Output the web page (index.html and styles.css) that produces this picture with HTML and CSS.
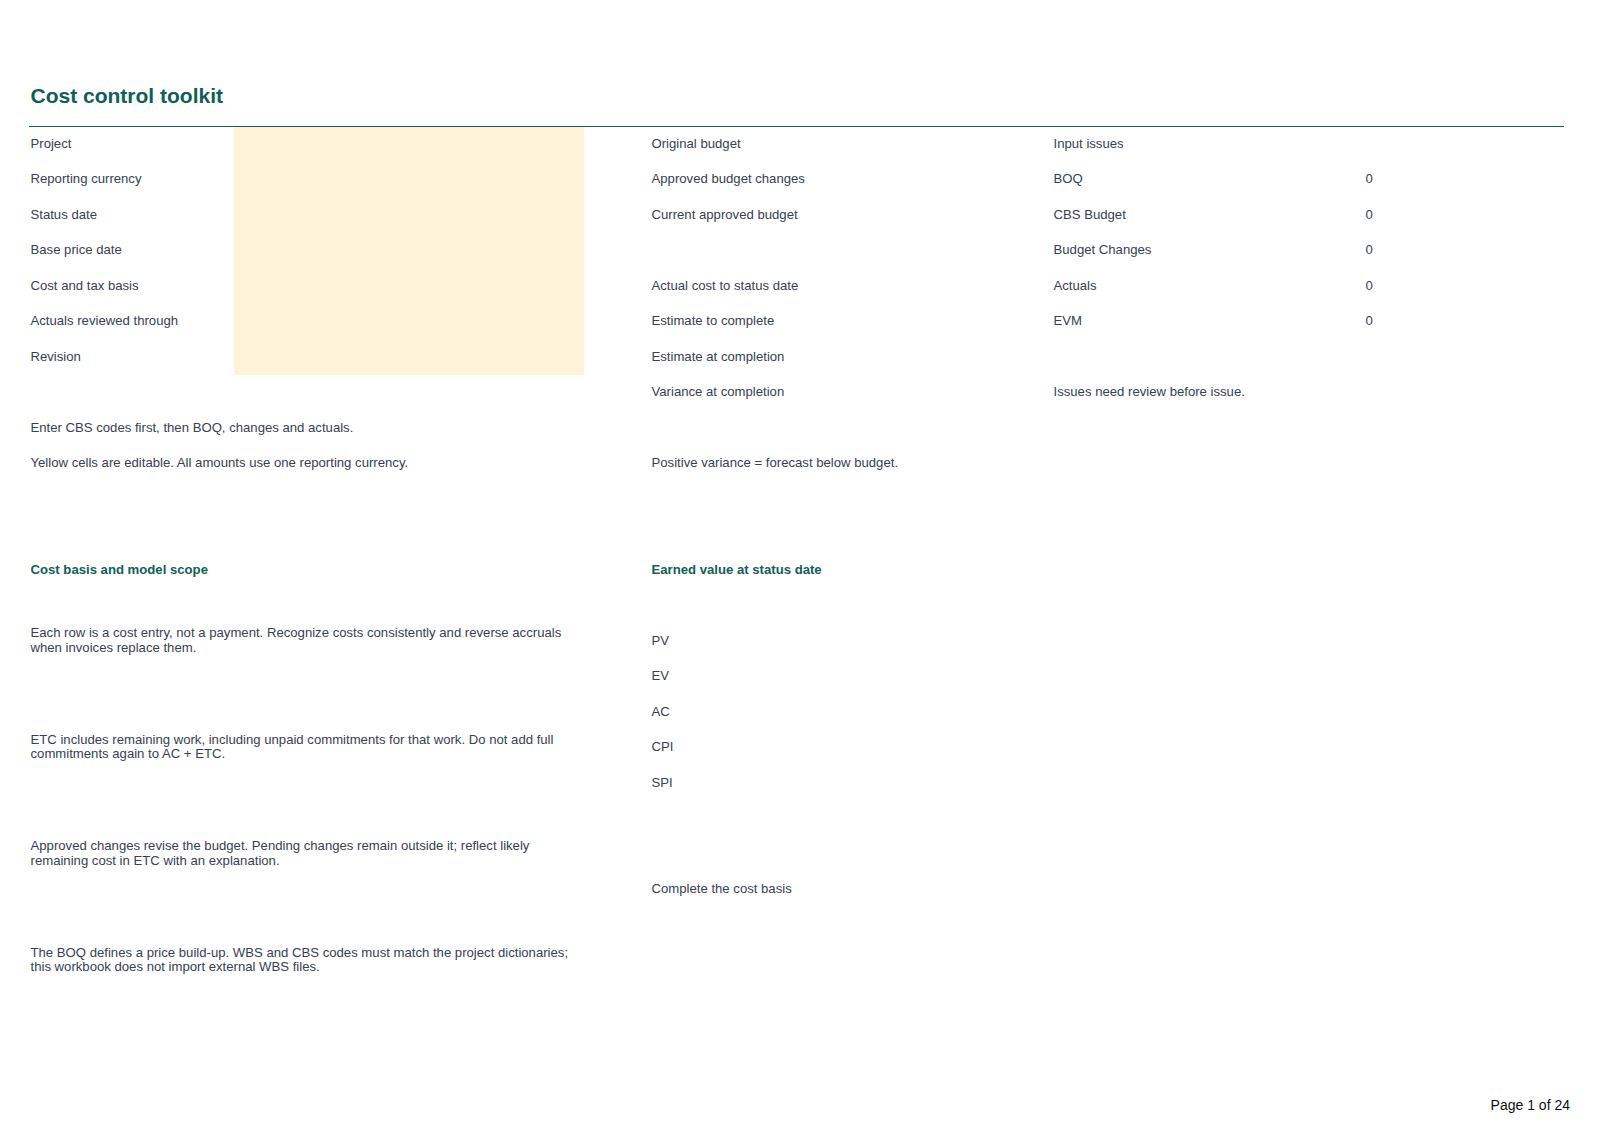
FILE: index.html
```html
<!DOCTYPE html>
<html lang="en">
<head>
<meta charset="utf-8">
<title>Cost control toolkit</title>
<link rel="stylesheet" href="styles.css">
</head>
<body>
<div class="page">
  <header class="head">
    <h1 class="title">Cost control toolkit</h1>
  </header>
  <div class="sheet">
    <div class="row"><div class="c">Project</div><div class="c edit"></div><div class="c"></div><div class="c">Original budget</div><div class="c">Input issues</div><div class="c"></div></div>
    <div class="row"><div class="c">Reporting currency</div><div class="c edit"></div><div class="c"></div><div class="c">Approved budget changes</div><div class="c">BOQ</div><div class="c">0</div></div>
    <div class="row"><div class="c">Status date</div><div class="c edit"></div><div class="c"></div><div class="c">Current approved budget</div><div class="c">CBS Budget</div><div class="c">0</div></div>
    <div class="row"><div class="c">Base price date</div><div class="c edit"></div><div class="c"></div><div class="c"></div><div class="c">Budget Changes</div><div class="c">0</div></div>
    <div class="row"><div class="c">Cost and tax basis</div><div class="c edit"></div><div class="c"></div><div class="c">Actual cost to status date</div><div class="c">Actuals</div><div class="c">0</div></div>
    <div class="row"><div class="c">Actuals reviewed through</div><div class="c edit"></div><div class="c"></div><div class="c">Estimate to complete</div><div class="c">EVM</div><div class="c">0</div></div>
    <div class="row"><div class="c">Revision</div><div class="c edit"></div><div class="c"></div><div class="c">Estimate at completion</div><div class="c"></div><div class="c"></div></div>
    <div class="row"><div class="c"></div><div class="c"></div><div class="c"></div><div class="c">Variance at completion</div><div class="c">Issues need review before issue.</div><div class="c"></div></div>
    <div class="row"><div class="c wide">Enter CBS codes first, then BOQ, changes and actuals.</div><div class="c"></div><div class="c"></div><div class="c"></div><div class="c"></div></div>
    <div class="row"><div class="c wide">Yellow cells are editable. All amounts use one reporting currency.</div><div class="c"></div><div class="c">Positive variance = forecast below budget.</div><div class="c"></div><div class="c"></div></div>
    <div class="row"></div>
    <div class="row"></div>
    <div class="row"><div class="c wide section">Cost basis and model scope</div><div class="c"></div><div class="c section">Earned value at status date</div><div class="c"></div><div class="c"></div></div>
    <div class="row"></div>
    <div class="row"><div class="c wide">Each row is a cost entry, not a payment. Recognize costs consistently and reverse accruals when invoices replace them.</div><div class="c"></div><div class="c">PV</div><div class="c"></div><div class="c"></div></div>
    <div class="row"><div class="c wide"></div><div class="c"></div><div class="c">EV</div><div class="c"></div><div class="c"></div></div>
    <div class="row"><div class="c wide"></div><div class="c"></div><div class="c">AC</div><div class="c"></div><div class="c"></div></div>
    <div class="row"><div class="c wide">ETC includes remaining work, including unpaid commitments for that work. Do not add full commitments again to AC + ETC.</div><div class="c"></div><div class="c">CPI</div><div class="c"></div><div class="c"></div></div>
    <div class="row"><div class="c wide"></div><div class="c"></div><div class="c">SPI</div><div class="c"></div><div class="c"></div></div>
    <div class="row"></div>
    <div class="row"><div class="c wide">Approved changes revise the budget. Pending changes remain outside it; reflect likely remaining cost in ETC with an explanation.</div><div class="c"></div><div class="c"></div><div class="c"></div><div class="c"></div></div>
    <div class="row"><div class="c wide"></div><div class="c"></div><div class="c">Complete the cost basis</div><div class="c"></div><div class="c"></div></div>
    <div class="row"></div>
    <div class="row"><div class="c wide">The BOQ defines a price build-up. WBS and CBS codes must match the project dictionaries; this workbook does not import external WBS files.</div><div class="c"></div><div class="c"></div><div class="c"></div><div class="c"></div></div>
  </div>
  <footer class="foot">Page 1 of 24</footer>
</div>
</body>
</html>
```

FILE: styles.css
```css
* {
  box-sizing: border-box;
}

html, body {
  margin: 0;
  padding: 0;
  background: #ffffff;
}

body {
  font-family: "Liberation Sans", Arial, sans-serif;
  color: #374151;
}

.page {
  width: 1600px;
  height: 1132px;
  display: flex;
  flex-direction: column;
  padding: 84px 36px 0 29px;
}

.head {
  border-bottom: 1.5px solid #115e59;
  padding-bottom: 17.5px;
}

.title {
  margin: 0;
  padding-left: 1.5px;
  font-size: 21px;
  line-height: 24px;
  font-weight: 700;
  color: #115e59;
}

.sheet {
  display: flex;
  flex-direction: column;
}

.row {
  display: grid;
  grid-template-columns: 205px 350px 66px 402px 312px 200px;
  height: 35.5px;
}

.c {
  display: flex;
  align-items: center;
  padding: 0 1.5px 1px;
  font-size: 13.15px;
  line-height: 14.5px;
  min-width: 0;
}

.wide {
  grid-column: span 2;
  padding-right: 3px;
}

.edit {
  background: #fef3d8;
}

.section {
  font-weight: 700;
  color: #115e59;
}

.foot {
  margin-top: auto;
  align-self: flex-end;
  margin-right: -6px;
  padding-bottom: 18.8px;
  font-size: 14px;
  line-height: 16px;
  color: #111111;
}
```
